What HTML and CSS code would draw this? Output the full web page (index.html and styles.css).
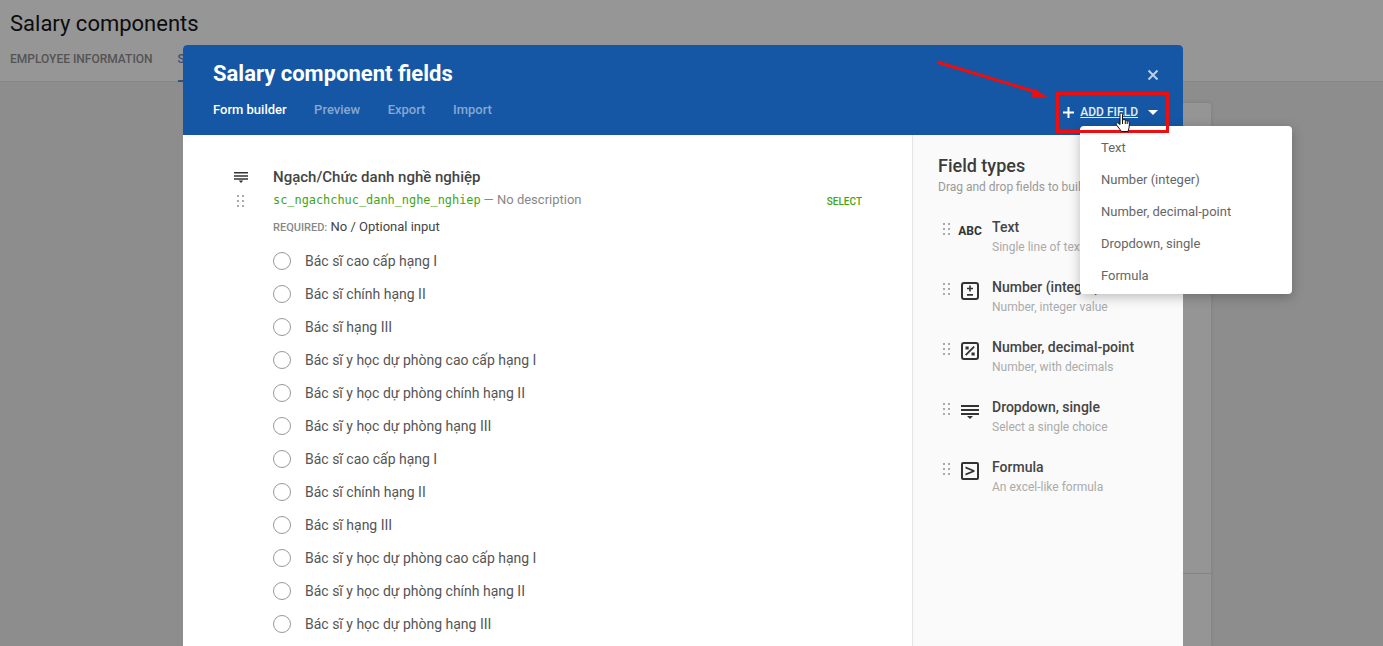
FILE: index.html
```html
<!DOCTYPE html>
<html lang="en">

<head>
    <meta charset="UTF-8">
    <title>Salary components</title>
    <link rel="stylesheet" href="styles.css">
</head>

<body>
    <svg class="defs" width="0" height="0">
        <symbol id="dots" viewBox="0 0 7 12">
            <rect x="0" y="0" width="2" height="2" />
            <rect x="5" y="0" width="2" height="2" />
            <rect x="0" y="5" width="2" height="2" />
            <rect x="5" y="5" width="2" height="2" />
            <rect x="0" y="10" width="2" height="2" />
            <rect x="5" y="10" width="2" height="2" />
        </symbol>
        <symbol id="dropdown" viewBox="0 0 18 14">
            <path d="M0 0h18v2H0zM0 4h18v2H0zM0 8h18v2H0zM6 11h6l-3 3z" />
        </symbol>
    </svg>

    <div class="page">
        <div class="top">
            <h1 class="page-title">Salary components</h1>
            <div class="page-tabs">
                <span class="page-tab">Employee information</span>
                <span class="page-tab active">Salary components</span>
            </div>
        </div>
        <div class="back-card">
            <div class="back-line"></div>
        </div>
    </div>

    <div class="modal">
        <div class="modal-head">
            <div>
                <div class="modal-title">Salary component fields</div>
                <div class="modal-tabs">
                    <span class="modal-tab active">Form builder</span>
                    <span class="modal-tab">Preview</span>
                    <span class="modal-tab">Export</span>
                    <span class="modal-tab">Import</span>
                </div>
            </div>
            <div class="head-actions">
                <svg class="close" width="12" height="12" viewBox="0 0 12 12">
                    <path d="M1.5 1.5l9 9M10.500 1.500l-9 9" />
                </svg>
                <div class="add-field">
                    <svg class="plus" width="11" height="11" viewBox="0 0 11 11">
                        <path d="M4.500 0h2v4.500H11v2H6.500V11h-2V6.500H0v-2h4.500z" />
                    </svg>
                    <span class="add-label">Add field</span>
                    <span class="caret"></span>
                </div>
            </div>
        </div>

        <div class="modal-body">
            <div class="builder">
                <div class="field">
                    <div class="field-icons">
                        <svg class="field-type" width="14" height="11"><use href="#dropdown" /></svg>
                        <svg class="drag" width="7" height="12"><use href="#dots" /></svg>
                    </div>
                    <div class="field-main">
                        <div class="field-name">Ngạch/Chức danh nghề nghiệp</div>
                        <div class="field-meta">
                            <span class="field-key">sc_ngachchuc_danh_nghe_nghiep</span>
                            <span class="field-desc">— No description</span>
                            <span class="field-kind">Select</span>
                        </div>
                        <div class="field-req"><span class="req-label">Required:</span> No / Optional input</div>
                        <ul class="options">
                            <li class="option"><span class="radio"></span>Bác sĩ cao cấp hạng I</li>
                            <li class="option"><span class="radio"></span>Bác sĩ chính hạng II</li>
                            <li class="option"><span class="radio"></span>Bác sĩ hạng III</li>
                            <li class="option"><span class="radio"></span>Bác sĩ y học dự phòng cao cấp hạng I</li>
                            <li class="option"><span class="radio"></span>Bác sĩ y học dự phòng chính hạng II</li>
                            <li class="option"><span class="radio"></span>Bác sĩ y học dự phòng hạng III</li>
                            <li class="option"><span class="radio"></span>Bác sĩ cao cấp hạng I</li>
                            <li class="option"><span class="radio"></span>Bác sĩ chính hạng II</li>
                            <li class="option"><span class="radio"></span>Bác sĩ hạng III</li>
                            <li class="option"><span class="radio"></span>Bác sĩ y học dự phòng cao cấp hạng I</li>
                            <li class="option"><span class="radio"></span>Bác sĩ y học dự phòng chính hạng II</li>
                            <li class="option"><span class="radio"></span>Bác sĩ y học dự phòng hạng III</li>
                        </ul>
                    </div>
                </div>
            </div>

            <div class="types">
                <div class="types-title">Field types</div>
                <div class="types-sub">Drag and drop fields to build your form</div>

                <div class="type">
                    <svg class="drag" width="7" height="12"><use href="#dots" /></svg>
                    <div class="type-icon abc">ABC</div>
                    <div>
                        <div class="type-name">Text</div>
                        <div class="type-desc">Single line of text</div>
                    </div>
                </div>
                <div class="type">
                    <svg class="drag" width="7" height="12"><use href="#dots" /></svg>
                    <div class="type-icon">
                        <svg width="18" height="18" viewBox="0 0 18 18">
                            <rect x="1" y="1" width="16" height="16" rx="2" class="box" />
                            <path d="M8.200 3.500h1.600v2.200H12v1.600H9.800v2.200H8.200V7.300H6V5.700h2.200zM6 12h6v1.700H6z" />
                        </svg>
                    </div>
                    <div>
                        <div class="type-name">Number (integer)</div>
                        <div class="type-desc">Number, integer value</div>
                    </div>
                </div>
                <div class="type">
                    <svg class="drag" width="7" height="12"><use href="#dots" /></svg>
                    <div class="type-icon">
                        <svg width="18" height="18" viewBox="0 0 18 18">
                            <rect x="1" y="1" width="16" height="16" rx="2" class="box" />
                            <path d="M12.500 4l1.300 1.300-8.500 8.500L4 12.500zM4.500 4.500h3.200v3H4.500zM10.500 10.500h3.200v3h-3.200z" />
                        </svg>
                    </div>
                    <div>
                        <div class="type-name">Number, decimal-point</div>
                        <div class="type-desc">Number, with decimals</div>
                    </div>
                </div>
                <div class="type">
                    <svg class="drag" width="7" height="12"><use href="#dots" /></svg>
                    <div class="type-icon dropdown-icon">
                        <svg width="18" height="14" viewBox="0 0 18 14"><use href="#dropdown" /></svg>
                    </div>
                    <div>
                        <div class="type-name">Dropdown, single</div>
                        <div class="type-desc">Select a single choice</div>
                    </div>
                </div>
                <div class="type">
                    <svg class="drag" width="7" height="12"><use href="#dots" /></svg>
                    <div class="type-icon">
                        <svg width="18" height="18" viewBox="0 0 18 18">
                            <rect x="1" y="1" width="16" height="16" rx="1" class="box" />
                            <path d="M4.500 4.500l9 3.700v1.600l-9 3.700v-1.900l6.500-2.600-6.500-2.600z" />
                        </svg>
                    </div>
                    <div>
                        <div class="type-name">Formula</div>
                        <div class="type-desc">An excel-like formula</div>
                    </div>
                </div>
            </div>
        </div>
    </div>

    <ul class="menu">
        <li class="menu-item">Text</li>
        <li class="menu-item">Number (integer)</li>
        <li class="menu-item">Number, decimal-point</li>
        <li class="menu-item">Dropdown, single</li>
        <li class="menu-item">Formula</li>
    </ul>

    <!-- annotation drawn on top of the screenshot -->
    <div class="red-box"></div>
    <svg class="red-arrow" width="120" height="50" viewBox="0 0 120 50">
        <path d="M1 2L100 32" fill="none" stroke="#f00d0d" stroke-width="3" />
        <path d="M112 37.500L97 28l-1 9.500z" fill="#f00d0d" />
    </svg>
    <svg class="hand" width="18" height="22" viewBox="0 0 18 22">
        <path d="M5 1.500c1 -1 2.500 -.5 2.500 1V8l1-.3c.8-.2 1.500 0 1.800.6.800-.3 1.600 0 1.900.6.800-.3 1.800.1 2 1 .3 1.600.3 4-.2 6l-.9 3.600H6.500L1.500 13c-.7-1-.3-2 .5-2.200.7-.2 1.500.2 3 1.700V2.500z" />
        <path d="M7.500 8v4M10.300 8.300V12M12.200 9v3" class="hand-line" />
    </svg>
</body>

</html>
```

FILE: styles.css
```css
*{
    box-sizing: border-box;
}
html, body{
    height: 100%;
}
body{
    margin: 0;
    overflow: hidden;
    background-color: #8d8d8d;
    font-family: Roboto, "Noto Sans", sans-serif;
    font-size: 14px;
    color: #444;
}
.defs{
    position: absolute;
}
ul{
    list-style: none;
    margin: 0;
    padding: 0;
}

/* page behind the dialog, already dimmed */
.page{
    height: 100%;
    display: flex;
    flex-direction: column;
}
.top{
    height: 82px;
    flex: none;
    padding: 11px 10px 0 10px;
    background-color: #969696;
    border-bottom: 1px solid #878787;
}
.page-title{
    margin: 0;
    font-size: 22px;
    line-height: 26px;
    font-weight: 400;
    color: #0c0c0c;
}
.page-tabs{
    display: flex;
    gap: 25px;
    margin-top: 13px;
}
.page-tab{
    height: 32px;
    font-size: 12px;
    line-height: 18px;
    font-weight: 500;
    text-transform: uppercase;
    color: #545454;
}
.page-tab.active{
    color: #34527c;
    border-bottom: 2px solid #34527c;
}
.back-card{
    flex: 1;
    width: 1000px;
    margin: 21px 172px 0 auto;
    padding-top: 470px;
    background-color: #959595;
    border-radius: 3px 3px 0 0;
    box-shadow: 0 0 4px rgba(0, 0, 0, 0.12);
}
.back-line{
    height: 1px;
    background-color: #848484;
}

/* dialog */
.modal{
    position: absolute;
    left: 183px;
    top: 45px;
    bottom: 0;
    width: 1000px;
    background-color: #fff;
    border-radius: 4px 4px 0 0;
    overflow: hidden;
    display: flex;
    flex-direction: column;
}
.modal-head{
    height: 90px;
    flex: none;
    display: flex;
    justify-content: space-between;
    padding: 16px 14px 0 30px;
    background-color: #1557a5;
    color: #fff;
}
.modal-title{
    font-size: 22px;
    line-height: 26px;
    font-weight: 700;
}
.modal-tabs{
    display: flex;
    gap: 27.500px;
    margin-top: 14px;
}
.modal-tab{
    font-size: 13px;
    line-height: 18px;
    font-weight: 500;
    color: #86a8d2;
}
.modal-tab.active{
    color: #fff;
}
.head-actions{
    display: flex;
    flex-direction: column;
    align-items: flex-end;
}
.close{
    margin: 8px 10px 0 0;
    stroke: #bcd0e8;
    stroke-width: 2;
    fill: none;
}
.add-field{
    display: flex;
    align-items: center;
    height: 18px;
    margin: 22px 11px 0 0;
}
.plus{
    fill: #fff;
    margin-right: 6px;
}
.add-label{
    font-size: 12px;
    font-weight: 500;
    text-transform: uppercase;
    text-decoration: underline;
    color: #e4edf7;
}
.caret{
    width: 0;
    height: 0;
    margin-left: 10px;
    border-left: 5.500px solid transparent;
    border-right: 5.500px solid transparent;
    border-top: 5.500px solid #fff;
}
.modal-body{
    flex: 1;
    display: flex;
    min-height: 0;
}

/* left form */
.builder{
    width: 729px;
    flex: none;
    padding: 32px 0 0 51px;
}
.field{
    display: flex;
}
.field-icons{
    width: 39px;
    flex: none;
    display: flex;
    flex-direction: column;
    align-items: flex-start;
}
.field-type{
    fill: #333;
    margin-top: 5px;
}
.field-icons .drag{
    margin: 12px 0 0 3px;
}
.drag{
    flex: none;
    fill: #aaa;
}
.field-main{
    width: 589px;
}
.field-name{
    font-size: 15px;
    line-height: 20px;
    font-weight: 500;
    color: #444;
}
.field-meta{
    display: flex;
    align-items: center;
    margin-top: 3px;
    height: 18px;
}
.field-key{
    margin-top: 1px;
    font-family: "DejaVu Sans Mono", monospace;
    font-size: 11.900px;
    color: #3fa512;
}
.field-desc{
    margin-left: 3px;
    font-size: 13px;
    color: #888;
}
.field-kind{
    margin: 4px 0 0 auto;
    font-size: 10px;
    font-weight: 500;
    text-transform: uppercase;
    color: #3fa512;
}
.field-req{
    margin-top: 10px;
    font-size: 13px;
    line-height: 18px;
    color: #444;
}
.req-label{
    font-size: 11px;
    font-weight: 500;
    text-transform: uppercase;
    color: #888;
}
.options{
    margin-top: 7px;
}
.option{
    display: flex;
    align-items: center;
    height: 33px;
    font-size: 14px;
    color: #555;
}
.radio{
    width: 18px;
    height: 18px;
    margin-right: 14px;
    border: 1px solid #999;
    border-radius: 50%;
}

/* right panel */
.types{
    flex: 1;
    padding: 20px 0 0 25px;
    background-color: #fafafa;
    border-left: 1px solid #e4e4e4;
    overflow: hidden;
}
.types-title{
    font-size: 18px;
    line-height: 22px;
    font-weight: 500;
    color: #3c3c3c;
}
.types-sub{
    margin-top: 2px;
    font-size: 12px;
    line-height: 16px;
    color: #999;
    white-space: nowrap;
}
.type{
    display: flex;
    height: 60px;
}
.types-sub + .type{
    margin-top: 23px;
}
.type .drag{
    margin: 5px 0 0 5px;
}
.type-icon{
    width: 42px;
    flex: none;
    display: flex;
    justify-content: center;
    padding: 4px 2px 0 0;
    fill: #333;
}
.dropdown-icon{
    padding-top: 7px;
}
.abc{
    font-size: 12px;
    line-height: 18px;
    font-weight: 700;
    color: #333;
}
.box{
    fill: none;
    stroke: #333;
    stroke-width: 2;
}
.type-name{
    font-size: 14px;
    line-height: 18px;
    font-weight: 500;
    color: #444;
}
.type-desc{
    margin-top: 2px;
    font-size: 12px;
    line-height: 18px;
    color: #aaa;
}

/* dropdown menu */
.menu{
    position: absolute;
    left: 1080px;
    top: 126px;
    width: 212px;
    height: 168px;
    padding-top: 6px;
    background-color: #fff;
    border-radius: 4px;
    box-shadow: 0 3px 12px rgba(0, 0, 0, 0.25);
}
.menu-item{
    height: 32px;
    padding-left: 21px;
    font-size: 13px;
    line-height: 32px;
    color: #666;
}

/* annotation */
.red-box{
    position: absolute;
    left: 1056px;
    top: 92px;
    width: 113px;
    height: 41px;
    border: 3px solid #f00d0d;
}
.red-arrow{
    position: absolute;
    left: 936px;
    top: 60px;
}
.hand{
    position: absolute;
    left: 1115px;
    top: 112px;
    fill: #fff;
    stroke: #111;
    stroke-width: 1;
}
.hand-line{
    fill: none;
}
```
